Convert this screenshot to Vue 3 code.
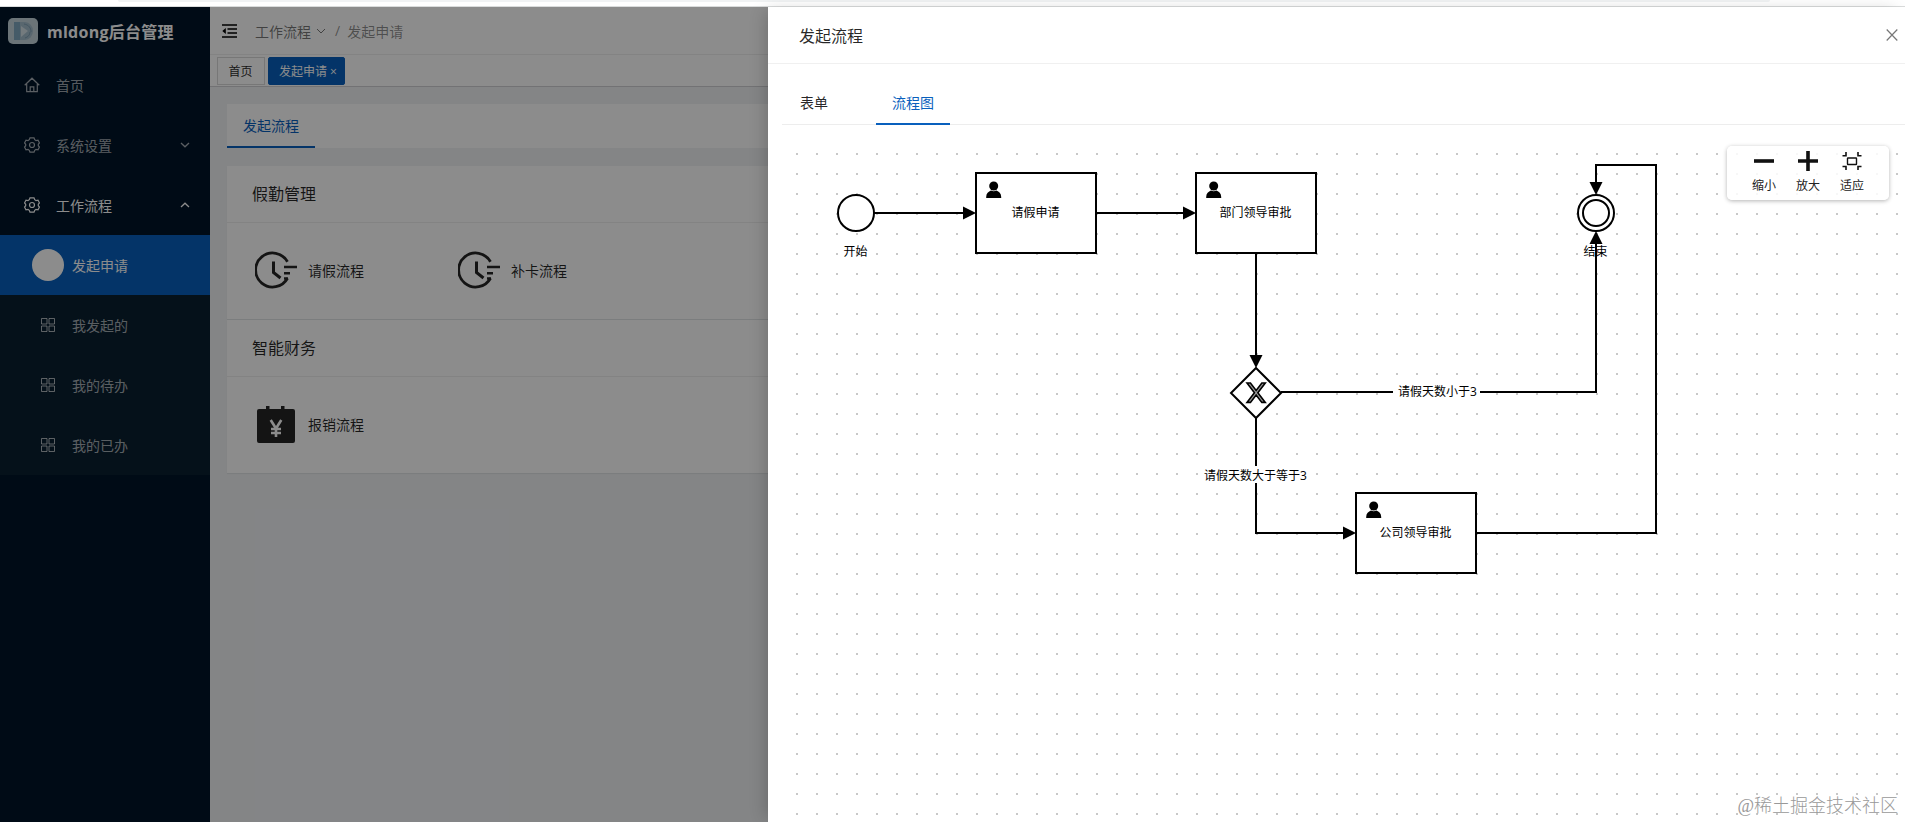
<template>
  <div class="page">
    <div class="browser-edge"><div class="address-bar" /></div>

    <div class="layout">
      <aside class="sider">
        <div class="logo">
          <svg class="logo-img" viewBox="0 0 30 26">
            <rect width="30" height="26" rx="5" fill="#c3d3da" />
            <path d="M6 4h8v18H6z" fill="#7fa6bd" />
            <path d="M12 4h5a8 9 0 0 1 0 18h-5z" fill="#a3bccb" />
            <path d="M13 8l7 5-7 6z" fill="#d3e0e6" />
            <path d="M16 6c5 1 7 4 7 8M17 20c3-1 5-3 5-6" fill="none" stroke="#7c9db2" />
          </svg>
          <span class="logo-title">mldong后台管理</span>
        </div>

        <div v-for="item in menus" :key="item.name" class="menu-item" :class="{ open: item.open }">
          <svg v-if="item.icon === 'home'" class="menu-icon" viewBox="0 0 16 16">
            <path d="M.7 8.300L8 1.200 15.300 8.300M2.700 7V14.700H13.300V7M6.200 14.700V9.800H9.800V14.700" />
          </svg>
          <svg v-else class="menu-icon" viewBox="0 0 16 16">
            <path
              d="M6 .8H10L10.700 2.700 12 3.500 14 3.200 15.500 6 14.300 7.300V8.700L15.500 10 14 12.800 12 12.500 10.700 13.300 10 15.200H6L5.300 13.300 4 12.500 2 12.800 .5 10 1.700 8.700V7.300L.5 6 2 3.200 4 3.500 5.300 2.700z"
            />
            <circle cx="8" cy="8" r="2.500" />
          </svg>
          <span class="menu-text">{{ item.name }}</span>
          <svg v-if="item.icon !== 'home'" class="menu-arrow" viewBox="0 0 10 6">
            <path :d="item.open ? 'M1 5L5 1.200L9 5' : 'M1 1L5 4.800L9 1'" />
          </svg>
        </div>

        <div class="submenu">
          <div v-for="(name, i) in subMenus" :key="name" class="sub-item" :class="{ active: i === 0 }">
            <span v-if="i === 0" class="sub-dot" />
            <svg v-else class="sub-icon" viewBox="0 0 14 14">
              <path d="M.5 .5h5.500v5.500H.5zM8 .5h5.500v5.500H8zM.5 8h5.500v5.500H.5zM8 8h5.500v5.500H8z" />
            </svg>
            <span>{{ name }}</span>
          </div>
        </div>
      </aside>

      <main class="main">
        <header class="header">
          <svg class="fold" viewBox="0 0 15 14">
            <path d="M0 1H15M5.500 5H15M5.500 9H15M0 13H15" stroke="#000" stroke-width="1.500" />
            <path d="M3.800 4V10L.3 7z" fill="#000" />
          </svg>
          <span class="crumb">工作流程</span>
          <svg class="crumb-arrow" viewBox="0 0 10 6"><path d="M1 1L5 5L9 1" /></svg>
          <span class="crumb-sep">/</span>
          <span class="crumb last">发起申请</span>
        </header>
        <div class="page-tabs">
          <span class="page-tab">首页</span>
          <span class="page-tab active">发起申请<i>×</i></span>
        </div>

        <section class="content">
          <div class="flow-tabs"><span class="flow-tab">发起流程</span></div>
          <div v-for="group in groups" :key="group.title" class="card">
            <div class="card-head">{{ group.title }}</div>
            <div class="card-body">
              <div v-for="flow in group.flows" :key="flow" class="flow">
                <svg v-if="group.icon === 'clock'" class="flow-icon" viewBox="0 0 42 42">
                  <path d="M32.500 12.800A17 17 0 1 0 32.500 29.200" fill="none" stroke="#262626" stroke-width="2.800" />
                  <path d="M18.500 12.500V23.500L25.500 29" fill="none" stroke="#262626" stroke-width="3" />
                  <path d="M29 18H42M29 24.200H35M29 29.500H33" stroke="#262626" stroke-width="2.600" />
                </svg>
                <svg v-else class="flow-icon" viewBox="0 0 42 42">
                  <path d="M4 6H11V3h3.500v3H26V3h3.500v3H38q2 0 2 2V38q0 2-2 2H4q-2 0-2-2V8q0-2 2-2z" fill="#262626" />
                  <path d="M15.700 17L21 25.500L26.300 17M21 25V34M16 26H26M16 30H26" fill="none" stroke="#fff" stroke-width="2.600" />
                </svg>
                <span>{{ flow }}</span>
              </div>
            </div>
          </div>
        </section>
      </main>

      <div class="mask" />

      <section class="drawer">
        <header class="drawer-head">
          <span>发起流程</span>
          <svg class="close" viewBox="0 0 12 12"><path d="M.7 .5L11.300 11.500M11.300 .5L.7 11.500" /></svg>
        </header>
        <nav class="tabs">
          <span class="tab">表单</span>
          <span class="tab active">流程图</span>
        </nav>

        <div class="canvas">
          <svg class="graph" width="1121" height="681" viewBox="784 141 1121 681">
            <defs>
              <pattern id="dots" x="796" y="153" width="20" height="20" patternUnits="userSpaceOnUse">
                <rect width="2" height="2" fill="#c8c8c8" />
              </pattern>
            </defs>
            <rect x="795" y="152" width="1110" height="670" fill="url(#dots)" />

            <g v-for="edge in edges" :key="edge.line">
              <path class="edge" :d="edge.line" />
              <path :d="edge.arrow" />
            </g>

            <circle class="shape" cx="856" cy="213" r="18" />
            <circle class="shape" cx="1596" cy="213" r="18" />
            <circle class="shape" cx="1596" cy="213" r="13" />

            <g v-for="task in tasks" :key="task.text" :transform="`translate(${task.x} ${task.y})`">
              <rect class="shape" width="120" height="80" />
              <circle cx="17.700" cy="13" r="4.500" />
              <path d="M10.200 25V24C10.200 20.500 12.500 18.500 15 17.600Q17.700 19 20.400 17.600C23 18.500 25.200 20.500 25.200 24V25z" />
              <text x="59.500" y="43.500">{{ task.text }}</text>
            </g>

            <path class="shape" d="M1256 368L1281 393L1256 418L1231 393z" />
            <path
              class="cross"
              transform="translate(1231 368)"
              d="m16 15 7.430 9.710-7.430 9.710h3.430l5.710-7.460 5.710 7.460h3.430l-7.430-9.710 7.430-9.710h-3.430l-5.710 7.460-5.710-7.460z"
            />

            <rect x="1393" y="383" width="87" height="17" fill="#fff" />
            <rect x="1203" y="466" width="106" height="17" fill="#fff" />
            <text v-for="label in labels" :key="label.text" :x="label.x" :y="label.y">{{ label.text }}</text>
          </svg>

          <div class="control">
            <div class="control-item">
              <svg viewBox="0 0 20 20"><path d="M0 10H20" stroke-width="3.600" /></svg>
              <span>缩小</span>
            </div>
            <div class="control-item">
              <svg viewBox="0 0 20 20"><path d="M0 10H20M10 0V20" stroke-width="3.600" /></svg>
              <span>放大</span>
            </div>
            <div class="control-item">
              <svg viewBox="0 0 20 20">
                <rect x="5.500" y="7" width="9" height="6.500" rx=".5" fill="none" stroke-width="1.400" />
                <path d="M.5 4.700H4V1M19.500 4.700H16V1M.5 15.500H4V19M19.500 15.500H16V19" fill="none" stroke-width="1.600" />
              </svg>
              <span>适应</span>
            </div>
          </div>
        </div>
      </section>

      <div class="watermark">@稀土掘金技术社区</div>
    </div>
  </div>
</template>

<script setup>
const menus = [
  { name: '首页', icon: 'home' },
  { name: '系统设置', icon: 'setting' },
  { name: '工作流程', icon: 'setting', open: true },
]
const subMenus = ['发起申请', '我发起的', '我的待办', '我的已办']

const groups = [
  { title: '假勤管理', icon: 'clock', flows: ['请假流程', '补卡流程'] },
  { title: '智能财务', icon: 'money', flows: ['报销流程'] },
]

const tasks = [
  { x: 976, y: 173, text: '请假申请' },
  { x: 1196, y: 173, text: '部门领导审批' },
  { x: 1356, y: 493, text: '公司领导审批' },
]

// line: the polyline, arrow: the triangle at its end
const edges = [
  { line: 'M874 213H970', arrow: 'M976 213l-13-6.500v13z' },
  { line: 'M1096 213H1190', arrow: 'M1196 213l-13-6.500v13z' },
  { line: 'M1256 253V362', arrow: 'M1256 368l-6.500-13h13z' },
  { line: 'M1281 392H1596V237', arrow: 'M1596 231l-6.500 13h13z' },
  { line: 'M1256 418V533H1350', arrow: 'M1356 533l-13-6.500v13z' },
  { line: 'M1476 533H1656V165H1596V190', arrow: 'M1596 195l-6.500-13h13z' },
]

const labels = [
  { x: 855.5, y: 256, text: '开始' },
  { x: 1595.5, y: 256, text: '结束' },
  { x: 1437.5, y: 395.5, text: '请假天数小于3' },
  { x: 1255.5, y: 479.5, text: '请假天数大于等于3' },
]
</script>

<style>
body {
  margin: 0;
  overflow: hidden;
}
</style>

<style scoped>
.page {
  height: 822px;
  display: flex;
  flex-direction: column;
  overflow: hidden;
  font-family: 'Open Sans', 'Noto Sans CJK SC', sans-serif;
  font-size: 14px;
  font-weight: 400;
  background: #fff;
}
.page * {
  box-sizing: border-box;
}
svg {
  display: block;
  flex-shrink: 0;
}

.browser-edge {
  height: 7px;
  flex-shrink: 0;
  border-bottom: 1px solid #dadcdc;
}
.address-bar {
  height: 2px;
  margin: 0 135px 0 118px;
  background: #f1f3f4;
  border-radius: 0 0 6px 6px;
}
.layout {
  position: relative;
  flex: 1;
  display: flex;
  min-height: 0;
}

/* sidebar */
.sider {
  width: 210px;
  flex-shrink: 0;
  background: #001529;
  color: rgba(255, 255, 255, 0.65);
}
.logo {
  height: 48px;
  display: flex;
  align-items: center;
  padding-left: 8px;
}
.logo-img {
  width: 30px;
  height: 26px;
}
.logo-title {
  margin-left: 9px;
  font-size: 16px;
  font-weight: 700;
  letter-spacing: 0.25px;
  color: #fff;
  white-space: nowrap;
}
.menu-item {
  height: 60px;
  display: flex;
  align-items: center;
  padding: 0 20px 0 24px;
}
.menu-item.open {
  color: #fff;
}
.menu-icon {
  width: 16px;
  height: 16px;
  fill: none;
  stroke: currentColor;
  stroke-width: 1.2;
}
.menu-text {
  margin-left: 16px;
  flex: 1;
}
.menu-arrow {
  width: 10px;
  height: 6px;
  fill: none;
  stroke: currentColor;
  stroke-width: 1.3;
}
.submenu {
  background: #0a2030;
}
.sub-item {
  height: 60px;
  display: flex;
  align-items: center;
  gap: 17px;
  padding-left: 41px;
}
.sub-item.active {
  gap: 8px;
  padding-left: 32px;
  color: #fff;
  background: #0960bd;
}
.sub-dot {
  width: 32px;
  height: 32px;
  border-radius: 50%;
  background: #fff;
}
.sub-icon {
  width: 14px;
  height: 14px;
  fill: none;
  stroke: currentColor;
  stroke-width: 1;
}

/* page behind the drawer */
.main {
  flex: 1;
  background: #f0f2f5;
}
.header {
  height: 48px;
  display: flex;
  align-items: center;
  padding-left: 12px;
  background: #fff;
  border-bottom: 1px solid #eee;
}
.fold {
  width: 15px;
  height: 14px;
  margin-right: 18px;
}
.crumb {
  color: rgba(0, 0, 0, 0.55);
}
.crumb.last {
  color: rgba(0, 0, 0, 0.45);
}
.crumb-arrow {
  width: 10px;
  height: 6px;
  margin-left: 5px;
  fill: none;
  stroke: #777;
}
.crumb-sep {
  margin: 0 7px 0 9px;
  color: rgba(0, 0, 0, 0.45);
}
.page-tabs {
  height: 32px;
  display: flex;
  gap: 3px;
  padding: 2px 0 0 7px;
  background: #fff;
  border-bottom: 1px solid #d0d0d3;
}
.page-tab {
  height: 28px;
  padding: 0 11px 0 10.5px;
  line-height: 28px;
  font-size: 12px;
  border: 1px solid #d9d9d9;
  color: rgba(0, 0, 0, 0.85);
}
.page-tab.active {
  border-color: #0960bd;
  border-radius: 2px;
  background: #0960bd;
  color: #fff;
  padding-right: 7px;
}
.page-tab i {
  margin-left: 3px;
  font-style: normal;
}
.content {
  padding: 17px 0 0 17px;
}
.flow-tabs {
  height: 44px;
  margin-bottom: 18px;
  display: flex;
  background: #fff;
}
.flow-tab {
  padding: 0 16px;
  line-height: 43px;
  color: #0960bd;
  border-bottom: 2px solid #0960bd;
}
.card {
  height: 153px;
  margin-bottom: 1px;
  background: #fff;
  box-shadow: 0 1px 1px rgba(0, 0, 0, 0.06);
}
.card-head {
  height: 57px;
  padding-left: 25px;
  line-height: 57px;
  font-size: 16px;
  color: rgba(0, 0, 0, 0.85);
  border-bottom: 1px solid #eee;
}
.card-body {
  display: flex;
  padding: 26px 0 0 28px;
}
.flow {
  width: 203px;
  display: flex;
  align-items: center;
  gap: 11px;
  color: rgba(0, 0, 0, 0.85);
}
.flow-icon {
  width: 42px;
  height: 42px;
}

.mask {
  position: absolute;
  inset: 0;
  background: rgba(0, 0, 0, 0.45);
}

/* drawer */
.drawer {
  position: absolute;
  top: 0;
  right: 0;
  bottom: 0;
  width: 1137px;
  background: #fff;
  box-shadow: -6px 0 16px -4px rgba(0, 0, 0, 0.2);
}
.drawer-head {
  height: 57px;
  display: flex;
  align-items: center;
  justify-content: space-between;
  padding: 0 7px 0 31px;
  font-size: 16px;
  color: rgba(0, 0, 0, 0.85);
  border-bottom: 1px solid #f0f0f0;
}
.close {
  width: 12px;
  height: 12px;
  fill: none;
  stroke: #777;
  stroke-width: 1.2;
}
.tabs {
  height: 61px;
  display: flex;
  align-items: flex-end;
  gap: 32px;
  margin-left: 14px;
  padding-left: 2px;
  border-bottom: 1px solid #ededed;
  color: rgba(0, 0, 0, 0.85);
}
.tab {
  height: 44px;
  padding: 0 16px;
  line-height: 44px;
  margin-bottom: -1px;
}
.tab.active {
  color: #0960bd;
  border-bottom: 2px solid #0960bd;
}
.canvas {
  position: relative;
  margin: 16px 0 0 16px;
}
.graph text {
  font-size: 12px;
  text-anchor: middle;
}
.edge {
  fill: none;
  stroke: #000;
  stroke-width: 2;
}
.shape {
  fill: #fff;
  stroke: #000;
  stroke-width: 2;
}
.cross {
  fill: #999;
  stroke: #000;
  stroke-width: 1.6;
}

/* zoom buttons, lying over the graph */
.control {
  position: absolute;
  top: 5px;
  right: 16px;
  width: 162px;
  height: 54px;
  display: flex;
  justify-content: center;
  padding-top: 5px;
  background: rgba(255, 255, 255, 0.85);
  border-radius: 5px;
  box-shadow: 0 1px 4px rgba(0, 0, 0, 0.3);
}
.control-item {
  width: 44px;
  display: flex;
  flex-direction: column;
  align-items: center;
  font-size: 12px;
  color: #222;
}
.control-item svg {
  width: 20px;
  height: 20px;
  stroke: #111;
}
.control-item span {
  margin-top: 6px;
  line-height: 18px;
}

.watermark {
  position: absolute;
  right: 7px;
  bottom: 2px;
  font-family: 'Liberation Serif', 'Noto Sans CJK SC', serif;
  font-size: 18px;
  font-weight: 300;
  line-height: 28px;
  color: #999;
}
</style>
